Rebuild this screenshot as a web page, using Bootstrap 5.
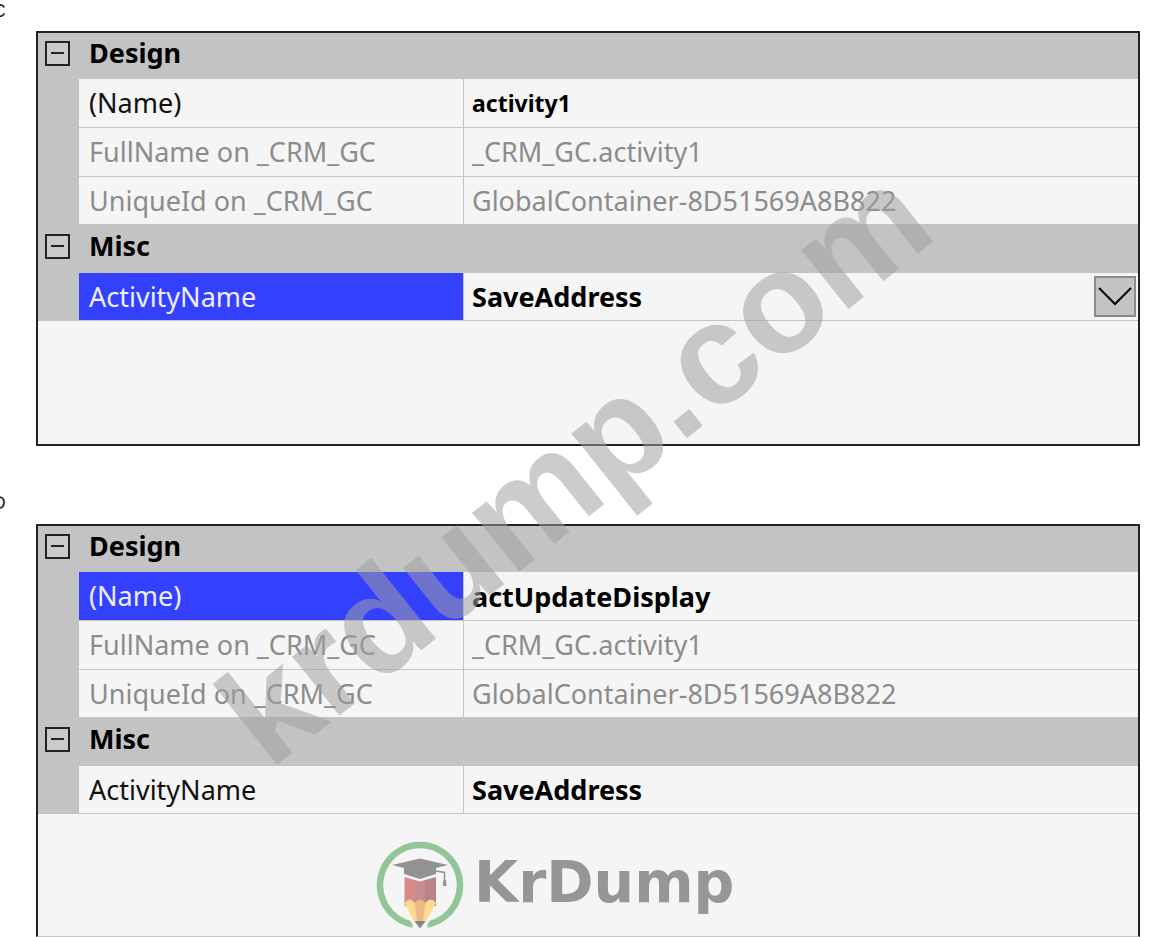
<!DOCTYPE html>
<html lang="en">
<head>
<meta charset="utf-8">
<meta name="viewport" content="width=device-width, initial-scale=1">
<title>Activity properties</title>
<link href="https://cdn.jsdelivr.net/npm/bootstrap@5.3.0/dist/css/bootstrap.min.css" rel="stylesheet">
<style>
  body { font-family: "Noto Sans", sans-serif; font-size: 27px; line-height: 36px; color: #111; background: #fff; overflow-x: hidden; }
  .sheet { overflow: hidden; padding: 0 23px 0 36px; }
  .option-tag { font-family: "Liberation Sans", sans-serif; font-size: 19px; line-height: 20px; height: 31px; padding-top: 1px; margin-left: -44px; color: #222; }
  .option-tag.second { height: 78px; padding-top: 47px; }
  .panel { border: 2px solid #222; background: #f5f5f5; min-height: 415px; }
  .panel.last { border-bottom: 1px solid #c4c4c4; min-height: 413px; }
  .props { width: 100%; table-layout: fixed; border-collapse: separate; border-spacing: 0; }
  .col-gutter { width: 41px; }
  .col-name { width: 35%; }
  .props th, .props td { padding: 0; height: 48px; vertical-align: middle; font-weight: 400; white-space: nowrap; }
  .props tr:nth-child(1) > * { height: 46px; }
  .props tr:nth-child(2) > *, .props tr:nth-child(3) > * { height: 49px; }
  .props .band th { background: #c3c3c3; font-weight: 700; color: #000; padding: 0 0 6px 10px; }
  .props .gut { background: #c3c3c3; padding: 0 0 6px 7px; line-height: 0; }
  .props .item th { padding-left: 10px; border-right: 1px solid #c4c4c4; border-bottom: 1px solid #c4c4c4; }
  .props .item td.val { padding-left: 8px; border-bottom: 1px solid #c4c4c4; }
  .props .dim th, .props .dim td { color: #8c8c8c; }
  .props .item.picked th { background: #3341ff; color: #eef; }
  .field { width: 100%; display: block; border: 0; padding: 0; background: transparent; font-weight: 700; color: #000; appearance: none; outline: 0; line-height: 36px; height: 40px; }
  .field.compact { font-size: 23px; }
  .toggle { width: 25px; height: 25px; border: 2px solid #222; padding: 0; background: #cacaca; }
  .toggle svg { display: block; margin: auto; }
  .drop-mark { position: absolute; right: 2px; top: 3px; pointer-events: none; }
  .watermark { position: absolute; left: 50%; top: 465px; margin-left: -8px; font: 700 143px/1 "Liberation Sans", sans-serif; color: rgba(161,161,161,.54); transform: translate(-50%,-50%) rotate(-38.6deg); pointer-events: none; white-space: nowrap; }
  .brand { position: absolute; left: 376px; top: 840px; pointer-events: none; gap: 10px; }
  .brand-name { font: 700 57px/80px "DejaVu Sans", sans-serif; color: #969696; padding-bottom: 6px; }
</style>
</head>
<body>
<main class="sheet position-relative">
  <div class="option-tag">C</div>
  <section class="panel">
    <table class="props">
      <colgroup><col class="col-gutter"><col class="col-name"><col></colgroup>
      <tbody>
        <tr class="band"><td class="gut"><button class="toggle" aria-label="Collapse Design"><svg width="13" height="2"><path d="M0 1H13" stroke="#222" stroke-width="2"/></svg></button></td><th colspan="2">Design</th></tr>
        <tr class="item"><td class="gut"></td><th><label for="n1">(Name)</label></th><td class="val"><input class="field compact" id="n1" value="activity1"></td></tr>
        <tr class="item dim"><td class="gut"></td><th>FullName on _CRM_GC</th><td class="val">_CRM_GC.activity1</td></tr>
        <tr class="item dim"><td class="gut"></td><th>UniqueId on _CRM_GC</th><td class="val">GlobalContainer-8D51569A8B822</td></tr>
        <tr class="band"><td class="gut"><button class="toggle" aria-label="Collapse Misc"><svg width="13" height="2"><path d="M0 1H13" stroke="#222" stroke-width="2"/></svg></button></td><th colspan="2">Misc</th></tr>
        <tr class="item picked"><td class="gut"></td><th><label for="a1">ActivityName</label></th><td class="val position-relative"><select class="field" id="a1"><option>SaveAddress</option></select><svg class="drop-mark" width="42" height="41" viewBox="0 0 42 41"><rect x="1" y="1" width="40" height="39" fill="#c3c3c3" stroke="#8a8a8a" stroke-width="2"/><path d="M5 12L21 28L37 12" fill="none" stroke="#000" stroke-width="2"/></svg></td></tr>
      </tbody>
    </table>
  </section>
  <div class="option-tag second">D</div>
  <section class="panel last">
    <table class="props">
      <colgroup><col class="col-gutter"><col class="col-name"><col></colgroup>
      <tbody>
        <tr class="band"><td class="gut"><button class="toggle" aria-label="Collapse Design"><svg width="13" height="2"><path d="M0 1H13" stroke="#222" stroke-width="2"/></svg></button></td><th colspan="2">Design</th></tr>
        <tr class="item picked"><td class="gut"></td><th><label for="n2">(Name)</label></th><td class="val"><input class="field" id="n2" value="actUpdateDisplay"></td></tr>
        <tr class="item dim"><td class="gut"></td><th>FullName on _CRM_GC</th><td class="val">_CRM_GC.activity1</td></tr>
        <tr class="item dim"><td class="gut"></td><th>UniqueId on _CRM_GC</th><td class="val">GlobalContainer-8D51569A8B822</td></tr>
        <tr class="band"><td class="gut"><button class="toggle" aria-label="Collapse Misc"><svg width="13" height="2"><path d="M0 1H13" stroke="#222" stroke-width="2"/></svg></button></td><th colspan="2">Misc</th></tr>
        <tr class="item"><td class="gut"></td><th><label for="a2">ActivityName</label></th><td class="val"><select class="field" id="a2"><option>SaveAddress</option></select></td></tr>
      </tbody>
    </table>
  </section>
  <div class="watermark">krdump.com</div>
  <div class="brand d-flex align-items-center">
    <svg width="88" height="90" viewBox="0 0 88 90">
      <path d="M37 84.500A40 40 0 1 1 51 84.500" fill="none" stroke="#92c698" stroke-width="6.500"/>
      <path d="M26 64H62L50 88H38Z" fill="#f5f5f5"/>
      <path d="M28.500 37L39 40V66H28.500Z" fill="#d98b8c"/><path d="M39 40L44 41.500L49 40V66H39Z" fill="#c68d90"/><path d="M49 40L60 37V66H49Z" fill="#b98488"/>
      <path d="M28.500 63Q33.500 56 39 63L42 81H38Z" fill="#fbdb8b"/><path d="M60 63Q55 56 49 63L46 81H50Z" fill="#fbdb8b"/><path d="M38.500 63Q44 56 49.500 63L47 81H41Z" fill="#f2b68b"/>
      <path d="M38.500 81H49.500L44 88.500Z" fill="#858585"/>
      <path d="M16 25L44 18.500L72 25L60 28V34L44 39L28 34V28Z" fill="#929292"/>
      <path d="M60 31L68.500 32.500V44" fill="none" stroke="#929292" stroke-width="1.500"/><path d="M67.500 40H70L70.500 46H67Z" fill="#929292"/>
    </svg>
    <span class="brand-name">KrDump</span>
  </div>
</main>
<script src="https://cdn.jsdelivr.net/npm/bootstrap@5.3.0/dist/js/bootstrap.bundle.min.js"></script>
</body>
</html>
